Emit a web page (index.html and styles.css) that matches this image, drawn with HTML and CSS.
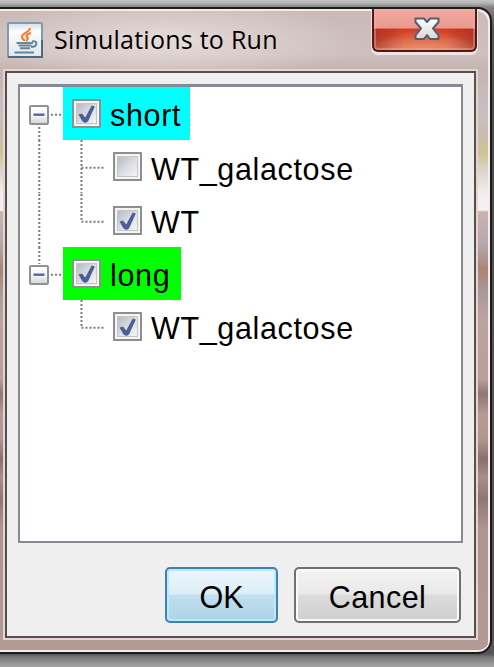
FILE: index.html
```html
<!DOCTYPE html>
<html lang="en">
<head>
<meta charset="utf-8">
<title>Simulations to Run</title>
<link rel="stylesheet" href="styles.css">
</head>
<body>
<svg width="0" height="0" class="defs" aria-hidden="true">
  <defs>
    <linearGradient id="well" x1="0" y1="0" x2="1" y2="1"><stop offset="0" stop-color="#b3bac2"/><stop offset=".5" stop-color="#dadcdf"/><stop offset="1" stop-color="#f7f7f7"/></linearGradient>
    <linearGradient id="knob" x1="0" y1="0" x2="0" y2="1"><stop offset="0" stop-color="#fff"/><stop offset=".55" stop-color="#f5f5f5"/><stop offset="1" stop-color="#d2d2d2"/></linearGradient>
    <linearGradient id="tile" x1="0" y1="0" x2="0" y2="1"><stop offset="0" stop-color="#d5dde3"/><stop offset=".25" stop-color="#fcfcfc"/><stop offset="1" stop-color="#e2e7ea"/></linearGradient>
    <linearGradient id="cross" x1="0" y1="0" x2="0" y2="1"><stop offset="0" stop-color="#fff"/><stop offset="1" stop-color="#d7d7d7"/></linearGradient>
    <symbol id="box" viewBox="0 0 29 29"><rect x="1" y="1" width="27" height="27" fill="#f4f4f4" stroke="#8f8f8f" stroke-width="2"/><rect x="4.5" y="4.5" width="20" height="20" fill="url(#well)" stroke="#c3c7cb"/></symbol>
    <symbol id="tick" viewBox="0 0 29 29"><path d="M6.5 15.5L10 14.5L13.2 18.5L19.7 6.5L22.8 7.5L16 22.5L13.5 24L10.5 22.5Z" fill="#4a5f97"/></symbol>
    <symbol id="minus" viewBox="0 0 20 20"><rect x="1" y="1" width="18" height="18" rx="1" fill="url(#knob)" stroke="#919191" stroke-width="2"/><path d="M4.5 9.7H15.5" stroke="#4b69ad" stroke-width="2.4"/></symbol>
  </defs>
</svg>
<main class="window">
  <header class="titlebar">
    <svg class="java" viewBox="0 0 36 36" width="36" height="36">
      <rect x="1" y="1" width="34" height="34" rx="1" fill="url(#tile)" stroke="#7e9bb0" stroke-width="2"/>
      <path d="M1 35H35V18" fill="none" stroke="#496b84" stroke-width="2"/>
      <path d="M22.5 6C24 10 14.5 11 15 15C15.2 17 17.5 17.5 17 19M24 11C20 12 18.5 13.5 20.5 15.5C21.5 17 20 18 19 19" fill="none" stroke="#ee8130" stroke-width="2.3"/>
      <path d="M9.5 21H26M11.5 23.5H24.5M13 26.3H23M25 19.5C31 18 31 25 24 25M7.5 30.5H27" fill="none" stroke="#64859b" stroke-width="2"/>
    </svg>
    <h1>Simulations to Run</h1>
    <button class="close" aria-label="Close">
      <svg viewBox="0 0 26 24" width="26" height="24"><path d="M1.5 1.5H10L13 5L16 1.5H24.5V5L19 11.5L24.5 18.5V22H16L13 18L10 22H1.5V18.5L7 11.5L1.5 5Z" fill="url(#cross)" stroke="#565d70" stroke-width="2" stroke-linejoin="round"/></svg>
    </button>
  </header>
  <section class="content">
    <div class="tree">
      <div class="row">
        <svg class="root-lines" viewBox="0 0 43 53.33"><path class="dots" d="M19.3 40V53.33M31 27.7H43"/><use href="#minus" x="9" y="18" width="20" height="20"/></svg>
        <div class="node short"><svg class="check"><use href="#box"/><use href="#tick"/></svg><span>short</span></div>
      </div>
      <div class="row">
        <svg class="child-lines" viewBox="0 0 84 53.33"><path class="dots" d="M19.3 0V53.33M61.5 0V53.33M61.5 27.7H84"/></svg>
        <div class="node"><svg class="check"><use href="#box"/></svg><span>WT_galactose</span></div>
      </div>
      <div class="row">
        <svg class="child-lines" viewBox="0 0 84 53.33"><path class="dots" d="M19.3 0V53.33M61.5 0V27.7M61.5 27.7H84"/></svg>
        <div class="node"><svg class="check"><use href="#box"/><use href="#tick"/></svg><span>WT</span></div>
      </div>
      <div class="row">
        <svg class="root-lines" viewBox="0 0 43 53.33"><path class="dots" d="M19.3 0V17M31 27.7H43"/><use href="#minus" x="9" y="18" width="20" height="20"/></svg>
        <div class="node long"><svg class="check"><use href="#box"/><use href="#tick"/></svg><span>long</span></div>
      </div>
      <div class="row">
        <svg class="child-lines" viewBox="0 0 84 53.33"><path class="dots" d="M61.5 0V27.7M61.5 27.7H84"/></svg>
        <div class="node"><svg class="check"><use href="#box"/><use href="#tick"/></svg><span>WT_galactose</span></div>
      </div>
    </div>
    <footer class="actions">
      <button class="btn ok">OK</button>
      <button class="btn cancel">Cancel</button>
    </footer>
  </section>
</main>
</body>
</html>
```
FILE: styles.css
```css
* { box-sizing: border-box; }
html { height: 100%; }
body {
  margin: 0;
  width: 494px;
  height: 667px;
  padding: 7px 2px 13px 0;
  overflow: hidden;
  background: linear-gradient(#c4c4c4 0, #b5b5b5 3px, #858585 7px, #555 30px, #4b4f52 120px, #555 500px, #555 654px, #777 657px, #a6a6a6 667px);
  font-family: "Liberation Sans", Arial, sans-serif;
}
.defs { position: absolute; }
button { padding: 0; margin: 0; color: #000; font-family: inherit; }
.window {
  width: 492px;
  height: 647px;
  padding: 0 12px 12px 3px;
  border: 2px solid #1d1b1b;
  border-left: 0;
  border-radius: 0 14px 14px 0;
  box-shadow: inset -2px 2px 0 #f3eceb, inset 0 -2px 0 #f3eceb;
  background:
    radial-gradient(ellipse 190px 42px at 165px 32px, #e5dcda 0, #e5dcda00 100%) 0 0 / 490px 60px no-repeat,
    linear-gradient(#c9bab7 0, #cfc0bd 45px, #c4b4b2 60px, #c8bfc2 105px, #c8bcaf 126px, #cfc392 144px, #ded8d3 165px, #f2eeed 184px, #f5f1f0 201px, #c9b2b0 203px, #b4a8ae 235px, #a98576 260px, #a99a9e 285px, #bba39f 310px, #b89f9b 370px, #8d7776 385px, #b59a96 405px, #b1958f 430px, #88706e 450px, #a98e8a 468px, #8e7775 490px, #ae9591 520px, #b49a95 100%);
}
.titlebar { display: flex; height: 60px; padding-left: 4px; }
.java { margin-top: 13px; flex: none; }
h1 {
  margin: 10px 0 0 11px;
  width: 318px;
  flex: none;
  font: 400 25px/40px "Open Sans", "Noto Sans", sans-serif;
  letter-spacing: 0.25px;
  white-space: nowrap;
}
.close {
  width: 105px;
  height: 43px;
  flex: none;
  display: flex;
  justify-content: center;
  padding: 8px 0 0 4px;
  border: 2px solid #501a16;
  border-top: 0;
  border-radius: 0 0 6px 6px;
  background: radial-gradient(ellipse 50px 20px at 50% 100%, #e98b68, #e98b6800), linear-gradient(90deg, #8e241b80, #8e241b00 30%, #8e241b00 70%, #8e241b80) 0 20px / 100% 23px no-repeat, linear-gradient(#f2aaa0 0, #e99a8d 19px, #d43d25 20px, #d34b2f 28px, #dc7b61 100%);
  box-shadow: 0 2px 0 1px #eee3e1, inset 0 0 0 2px #f3b3a666;
}
.content {
  width: 471px;
  height: 567px;
  margin: 2px 0 0 2px;
  padding: 11px;
  border: 2px solid #5a4e4c;
  background: #efefef;
  box-shadow: 0 0 0 2px #e1d6d3;
}
.tree {
  width: 445px;
  height: 459px;
  border: 2px solid #858a94;
  border-top-width: 3px;
  background: #fff;
}
.row { display: flex; height: 53.33px; }
.root-lines { width: 43px; height: 53.33px; flex: none; }
.child-lines { width: 84px; height: 53.33px; flex: none; }
.dots { fill: none; stroke: #7c7c7c; stroke-width: 2; stroke-dasharray: 2 2; }
.node {
  display: flex;
  align-items: center;
  height: 53.33px;
  padding-left: 9px;
  font-size: 30.5px;
  line-height: 52px;
  letter-spacing: 0.65px;
  white-space: nowrap;
}
.node span { padding-top: 3px; }
.check { width: 29px; height: 29px; flex: none; margin-right: 9px; }
.short { width: 127px; background: #0ff; }
.long { width: 118px; background: #0f0; }
.actions { display: flex; justify-content: flex-end; gap: 16px; padding: 24px 2px 0 0; }
.btn {
  height: 56px;
  border-radius: 5px;
  font-size: 30.5px;
  line-height: 52px;
  padding-top: 2px;
}
.ok {
  width: 113px;
  border: 2px solid #3f82b2;
  background: linear-gradient(#edf6fb 0, #dceef7 48%, #c2dfef 50%, #acd3e7 100%);
  box-shadow: inset 0 0 0 2px #b8eafa;
}
.cancel {
  width: 167px;
  border: 2px solid #707070;
  background: linear-gradient(#f3f3f3 0, #e9e9e9 48%, #dcdcdc 50%, #cecece 100%);
  box-shadow: inset 0 0 0 2px #fafafa;
  letter-spacing: 0.4px;
}
```
